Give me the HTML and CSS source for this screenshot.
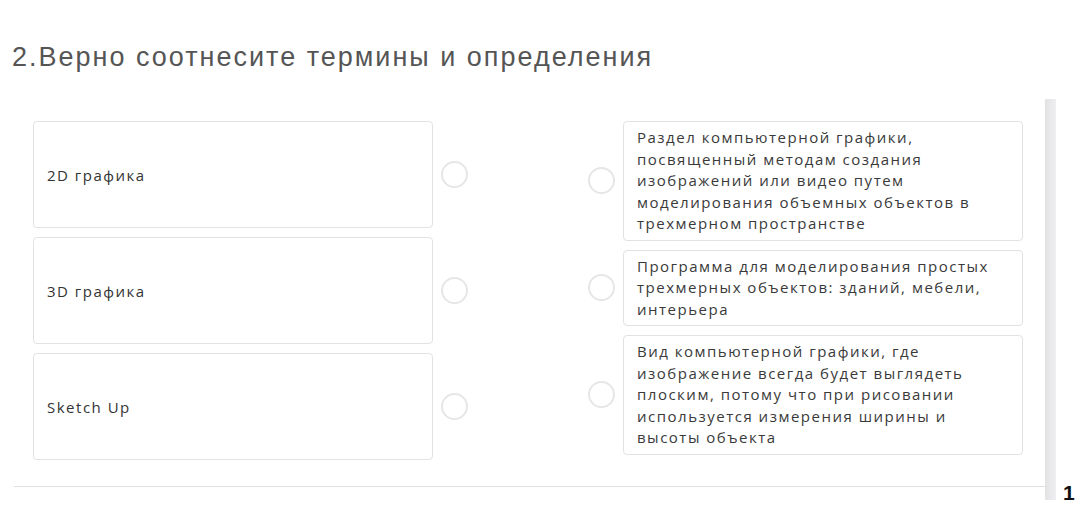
FILE: index.html
```html
<!DOCTYPE html>
<html lang="ru">
<head>
    <meta charset="UTF-8">
    <meta name="viewport" content="width=device-width, initial-scale=1.0">
    <title>Соотнесите термины</title>
    <link rel="stylesheet" href="styles.css">
</head>
<body>
    <div class="page">
        <div class="question">
            <h2 class="question-title">2.Верно соотнесите термины и определения</h2>
            <div class="match">
                <div class="terms">
                    <div class="term-row">
                        <div class="term-box">2D графика</div>
                        <span class="dot"></span>
                    </div>
                    <div class="term-row">
                        <div class="term-box">3D графика</div>
                        <span class="dot"></span>
                    </div>
                    <div class="term-row">
                        <div class="term-box">Sketch Up</div>
                        <span class="dot"></span>
                    </div>
                </div>
                <div class="defs">
                    <div class="def-row">
                        <span class="dot"></span>
                        <div class="def-box">Раздел компьютерной графики, посвященный методам создания изображений или видео путем моделирования объемных объектов в трехмерном пространстве</div>
                    </div>
                    <div class="def-row">
                        <span class="dot"></span>
                        <div class="def-box">Программа для моделирования простых трехмерных объектов: зданий, мебели, интерьера</div>
                    </div>
                    <div class="def-row">
                        <span class="dot"></span>
                        <div class="def-box">Вид компьютерной графики, где изображение всегда будет выглядеть плоским, потому что при рисовании используется измерения ширины и высоты объекта</div>
                    </div>
                </div>
            </div>
            <div class="divider"></div>
        </div>
        <div class="scroll-track"></div>
        <div class="page-num">1</div>
    </div>
</body>
</html>
```

FILE: styles.css
```css
body {
    margin: 0;
    background: #fff;
    font-family: 'Open Sans', 'Noto Sans', sans-serif;
    color: #333;
}
.page {
    display: flex;
    height: 522px;
    overflow: hidden;
}
.question {
    width: 1045px;
    flex-shrink: 0;
}
.question-title {
    margin: 40px 0 0 12px;
    font-family: 'Liberation Sans', Arial, sans-serif;
    font-weight: normal;
    font-size: 27px;
    letter-spacing: 2px;
    line-height: 34px;
    color: #555;
}
.match {
    display: flex;
    margin: 47px 0 0 33px;
}
.terms,
.defs {
    display: flex;
    flex-direction: column;
    gap: 9px;
}
.term-row,
.def-row {
    display: flex;
    align-items: center;
    gap: 8px;
}
.defs {
    margin-left: 120px;
}
.term-box {
    width: 385px;
    height: 105px;
    padding-left: 13px;
    display: flex;
    align-items: center;
    border: 1px solid #e2e2e2;
    border-radius: 4px;
    font-size: 15px;
    letter-spacing: 1.5px;
}
.def-box {
    width: 372px;
    padding: 5px 13px 5px 13px;
    border: 1px solid #e2e2e2;
    border-radius: 4px;
    font-size: 15px;
    letter-spacing: 1.5px;
    line-height: 21.5px;
    color: #3a3a3a;
}
.dot {
    width: 23px;
    height: 23px;
    border: 2px solid #e6e6e6;
    border-radius: 50%;
    flex-shrink: 0;
}
.divider {
    margin: 26px 0 0 14px;
    height: 1px;
    background: #e0e0e0;
}
.scroll-track {
    width: 11px;
    height: 401px;
    margin-top: 99px;
    flex-shrink: 0;
    background: linear-gradient(to right, #e2e2e4, #efeff1);
}
.page-num {
    align-self: flex-start;
    margin: 481px 0 0 7px;
    font-family: 'Liberation Sans', Arial, sans-serif;
    font-weight: bold;
    font-size: 21px;
    color: #111;
}
```
